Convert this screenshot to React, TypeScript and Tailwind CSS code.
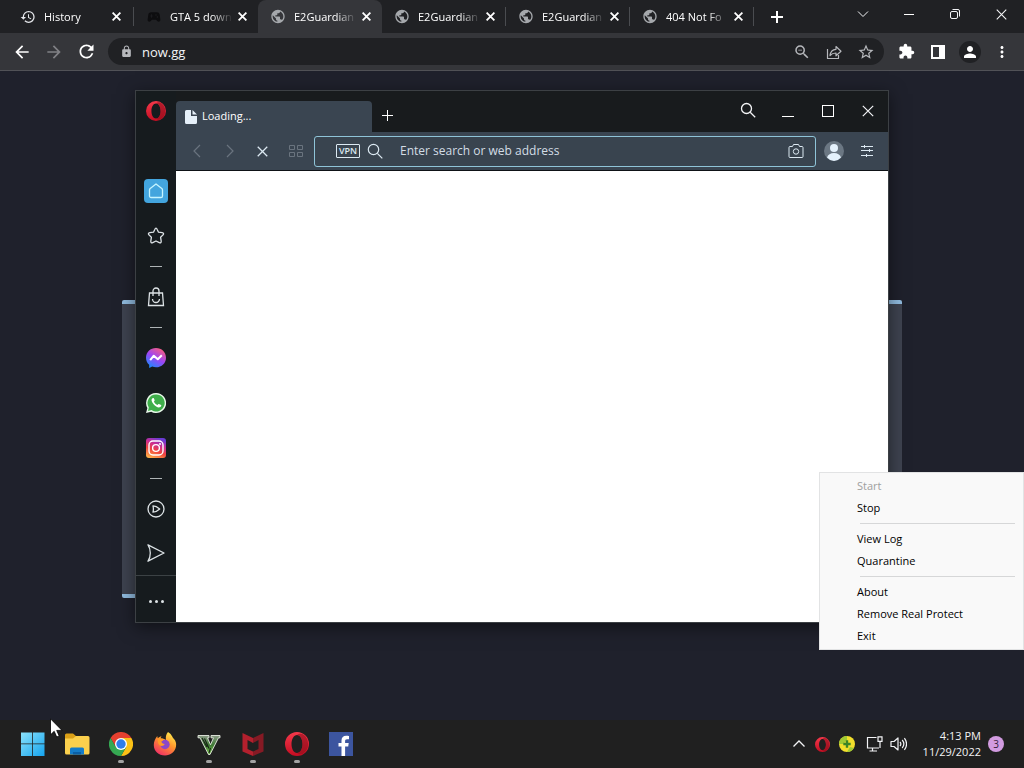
import type { ReactNode } from 'react';
import clsx from 'clsx';
import {
  MdArrowBack,
  MdArrowForward,
  MdExtension,
  MdHistory,
  MdLock,
  MdMoreVert,
  MdPerson,
  MdPublic,
  MdRefresh,
  MdSportsEsports,
  MdStarBorder,
  MdZoomOut,
} from 'react-icons/md';

const globe = <MdPublic className="text-[#a5a8ac]" size={17} />;

const tabs = [
  { title: 'History', icon: <MdHistory className="text-gray-200" size={16} /> },
  { title: 'GTA 5 down', icon: <MdSportsEsports className="text-[#0d0d0f]" size={18} /> },
  { title: 'E2Guardian', icon: globe, active: true },
  { title: 'E2Guardian', icon: globe },
  { title: 'E2Guardian', icon: globe },
  { title: '404 Not Fo', icon: globe },
];

function IconButton({
  label,
  className,
  children,
}: {
  label: string;
  className?: string;
  children: ReactNode;
}) {
  return (
    <button aria-label={label} className={clsx('flex shrink-0 items-center justify-center', className)}>
      {children}
    </button>
  );
}

function CrossIcon({ size = 12, stroke = 1.2 }: { size?: number; stroke?: number }) {
  return (
    <svg width={size} height={size} viewBox="0 0 12 12" fill="none" stroke="currentColor" strokeWidth={stroke}>
      <path d="M.8.8l10.400 10.400M11.200.8L.8 11.200" />
    </svg>
  );
}

function OperaLogo({ size, id }: { size: number; id: string }) {
  return (
    <svg width={size} height={size} viewBox="0 0 24 24">
      <defs>
        <linearGradient id={id} x1="0" y1="0" x2="0" y2="1">
          <stop offset="0" stopColor="#f5394b" />
          <stop offset="1" stopColor="#c40d22" />
        </linearGradient>
      </defs>
      <path
        fillRule="evenodd"
        fill={`url(#${id})`}
        d="M12 0a12 12 0 1 0 0 24 12 12 0 0 0 0-24zm0 3c3.200 0 5.500 4 5.500 9s-2.300 9-5.500 9-5.500-4-5.500-9S8.800 3 12 3z"
      />
      <path
        fill="#8d0d1b"
        opacity=".6"
        d="M12 3c2-1.800 5-1.800 7-.1A12 12 0 0 1 19 21c-2 1.800-5 1.800-7 0 3.200 0 5.500-4 5.500-9S15.200 3 12 3z"
      />
    </svg>
  );
}

function TabStrip() {
  return (
    <div className="flex h-[33px] bg-[#202124] pl-[9px]">
      {tabs.map((tab, i) => (
        <div
          key={i}
          className={clsx(
            'flex shrink-0 items-center',
            i === 0 ? 'w-[125px] pl-[11px]' : 'w-[124px] pl-3',
            tab.active && 'rounded-t-lg bg-[#35363a]',
          )}
        >
          <span className="flex w-4 shrink-0 justify-center">{tab.icon}</span>
          <span className="ml-2 w-[64px] shrink-0 whitespace-nowrap text-[11px] leading-4 text-white [mask-image:linear-gradient(to_right,black_65%,transparent_98%)]">
            {tab.title}
          </span>
          <IconButton label={`Close ${tab.title}`} className="h-4 w-4 text-white">
            <CrossIcon size={9} stroke={2.4} />
          </IconButton>
          <span
            className={clsx('ml-auto h-[19px] w-px', i === 1 || i === 2 ? 'bg-transparent' : 'bg-[#4a4c50]')}
          />
        </div>
      ))}
      <IconButton label="New tab" className="ml-[13px] w-5 text-white">
        <svg width="12" height="12" viewBox="0 0 12 12" stroke="currentColor" strokeWidth="2">
          <path d="M6 0v12M0 6h12" />
        </svg>
      </IconButton>
      <div className="ml-auto flex h-7 text-gray-100">
        <IconButton label="Search tabs" className="w-[46px]">
          <svg width="12" height="8" viewBox="0 0 12 8" fill="none" stroke="currentColor">
            <path d="M1 1.500l5 5 5-5" />
          </svg>
        </IconButton>
        <IconButton label="Minimize" className="w-[46px]">
          <span className="h-px w-[10px] bg-white" />
        </IconButton>
        <IconButton label="Restore" className="w-[46px]">
          <svg width="12" height="12" viewBox="0 0 12 12" fill="none" stroke="currentColor">
            <rect x="1.500" y="3.500" width="7" height="7" rx="1.500" />
            <path d="M3.500 1.500H9A1.500 1.500 0 0 1 10.500 3V8.500" />
          </svg>
        </IconButton>
        <IconButton label="Close" className="w-[46px]">
          <CrossIcon size={11} />
        </IconButton>
      </div>
    </div>
  );
}

function Toolbar() {
  return (
    <div className="flex h-[38px] items-center gap-[6px] border-b border-[#515257] bg-[#35363a] px-[6px]">
      <div className="flex text-white">
        <IconButton label="Back" className="w-8">
          <MdArrowBack size={20} />
        </IconButton>
        <IconButton label="Forward" className="w-8 text-[#808185]">
          <MdArrowForward size={20} />
        </IconButton>
        <IconButton label="Reload" className="w-8">
          <MdRefresh size={21} />
        </IconButton>
      </div>
      <div className="flex h-[27px] flex-1 items-center rounded-full bg-[#202124] pl-3 pr-[2px] text-[#b6b8bc]">
        <MdLock size={13} className="shrink-0" />
        <input
          aria-label="Address"
          defaultValue="now.gg"
          className="ml-[9px] min-w-0 flex-1 bg-transparent text-[13px] leading-5 text-gray-100 outline-none"
        />
        <IconButton label="Zoom" className="w-8">
          <MdZoomOut size={18} />
        </IconButton>
        <IconButton label="Share" className="w-8">
          <svg width="16" height="16" viewBox="0 0 16 16" fill="none" stroke="currentColor" strokeWidth="1.200">
            <path d="M1.500 5v9.500h11V11M4 11.500c.5-4 2.500-6 6-6.200V2.500l5 4.700-5 4.600V9c-2.500 0-4.300.6-6 2.500z" strokeLinejoin="round" />
          </svg>
        </IconButton>
        <IconButton label="Bookmark" className="w-8">
          <MdStarBorder size={18} />
        </IconButton>
      </div>
      <div className="flex text-white">
        <IconButton label="Extensions" className="w-8">
          <MdExtension size={17} />
        </IconButton>
        <IconButton label="Side panel" className="w-8">
          <svg width="14" height="14" viewBox="0 0 14 14">
            <path fill="currentColor" fillRule="evenodd" d="M0 0h14v14H0zM2 2v10h6V2z" />
          </svg>
        </IconButton>
        <IconButton label="Profile" className="w-8">
          <span className="flex h-[22px] w-[22px] items-center justify-center rounded-full bg-[#202124]">
            <MdPerson size={18} />
          </span>
        </IconButton>
        <IconButton label="Menu" className="w-8">
          <MdMoreVert size={18} />
        </IconButton>
      </div>
    </div>
  );
}

function SidebarItem({ label, children, short }: { label: string; children: ReactNode; short?: boolean }) {
  return (
    <IconButton label={label} className={clsx('w-full', short ? 'h-11' : 'h-[45px]')}>
      {children}
    </IconButton>
  );
}

function SidebarRule() {
  return <div className="mx-auto mb-[7px] mt-2 h-px w-3 bg-[#aeb4b6]" />;
}

function OperaSidebar() {
  return (
    <nav aria-label="Sidebar" className="flex w-10 shrink-0 flex-col bg-[#161b1e] text-[#dde3e6]">
      <div className="flex h-[77px] justify-center pt-[10px]">
        <OperaLogo size={20} id="operaSide" />
      </div>
      <SidebarItem label="Home">
        <span className="flex h-6 w-6 items-center justify-center rounded-sm bg-[#43a5de]">
          <svg width="16" height="16" viewBox="0 0 16 16" fill="none" stroke="#c5f4ff" strokeWidth="1.300">
            <path d="M8 1l5.800 4.500c.5.400.7.800.7 1.400v6a1.600 1.600 0 0 1-1.600 1.600H3.100a1.600 1.600 0 0 1-1.600-1.600v-6c0-.6.2-1 .7-1.400z" strokeLinejoin="round" />
          </svg>
        </span>
      </SidebarItem>
      <SidebarItem label="Speed dials">
        <svg width="18" height="18" viewBox="0 0 18 18" fill="none" stroke="currentColor" strokeWidth="1.300" strokeLinejoin="round">
          <path d="M9 1.200c.6 0 .9.500 1.200 1.200l1.300 2.800 3.700.5c1.500.2 1.800 1.300.8 2.200l-2.400 2.400.6 3.900c.2 1.400-.7 2-1.900 1.400L9 14l-3.300 1.600c-1.200.6-2.100 0-1.900-1.400l.6-3.900L2 7.900C1 7 1.300 5.900 2.800 5.700l3.700-.5 1.300-2.800C8.100 1.700 8.400 1.200 9 1.200z" />
        </svg>
      </SidebarItem>
      <SidebarRule />
      <SidebarItem label="Shopping">
        <svg width="18" height="20" viewBox="0 0 18 20" fill="none" stroke="currentColor" strokeWidth="1.300">
          <path d="M2.500 6h13l1 12.500h-15zM6 9V4a3 3 0 0 1 6 0v5M5.500 12a3.500 3.500 0 0 0 7 0" />
        </svg>
      </SidebarItem>
      <SidebarRule />
      <SidebarItem label="Messenger">
        <svg width="20" height="20" viewBox="0 0 20 20">
          <defs>
            <linearGradient id="messenger" x1=".2" y1="1" x2=".8" y2="0">
              <stop offset="0" stopColor="#168dff" />
              <stop offset=".5" stopColor="#9c45f5" />
              <stop offset="1" stopColor="#ff5f78" />
            </linearGradient>
          </defs>
          <path fill="url(#messenger)" d="M10 0C4.300 0 0 4.100 0 9.700c0 2.900 1.200 5.400 3.200 7.100V20l3-1.400c1.200.5 2.500.7 3.800.7 5.700 0 10-4.100 10-9.600S15.700 0 10 0z" />
          <path fill="none" stroke="#fff" strokeWidth="2" strokeLinejoin="round" d="M4.200 12.200l3.600-4.500 4 3.600 4-4" />
        </svg>
      </SidebarItem>
      <SidebarItem label="WhatsApp">
        <svg width="20" height="20" viewBox="0 0 20 20">
          <path fill="#e9f9ea" d="M10 0a10 10 0 0 0-8.600 15L0 20l5.200-1.300A10 10 0 1 0 10 0z" />
          <path fill="#3fae4b" d="M10 1.500a8.500 8.500 0 0 0-7.200 13L2 18l3.500-.9A8.500 8.500 0 1 0 10 1.500z" />
          <path fill="#fff" d="M6.800 5c-1.900 1-1.700 3.300.6 6 2.500 2.900 5 4.300 6.900 3.100 1.200-.8 1.100-1.700.8-2l-2.200-1.100c-.4-.1-.6.1-1.300 1.100-1.500-.5-3-1.900-3.700-3.500.8-.9.900-1 .7-1.500L7.800 5.200C7.600 4.900 7.200 4.800 6.800 5z" />
        </svg>
      </SidebarItem>
      <SidebarItem label="Instagram">
        <svg width="20" height="20" viewBox="0 0 20 20">
          <defs>
            <linearGradient id="instagram" x1=".2" y1="1" x2=".6" y2="0">
              <stop offset="0" stopColor="#ffb34a" />
              <stop offset=".4" stopColor="#f0443e" />
              <stop offset=".7" stopColor="#cc2d93" />
              <stop offset="1" stopColor="#6a3bd5" />
            </linearGradient>
          </defs>
          <rect width="20" height="20" rx="3" fill="url(#instagram)" />
          <g fill="none" stroke="#fff" strokeWidth="1.400">
            <rect x="3" y="3" width="14" height="14" rx="4" />
            <circle cx="10" cy="10" r="3.400" />
          </g>
          <circle cx="14" cy="6" r="1" fill="#fff" />
        </svg>
      </SidebarItem>
      <SidebarRule />
      <SidebarItem label="Player">
        <svg width="18" height="18" viewBox="0 0 18 18" fill="none" stroke="currentColor" strokeWidth="1.300" strokeLinejoin="round">
          <circle cx="9" cy="9" r="8" />
          <path d="M6 5.800c1.800 0 4.500 1.200 6.700 3.200C10.500 11 7.800 12.200 6 12.200c.5-2 .5-4.400 0-6.400z" />
        </svg>
      </SidebarItem>
      <SidebarItem label="My Flow" short>
        <svg width="18" height="18" viewBox="0 0 18 18" fill="none" stroke="currentColor" strokeWidth="1.300" strokeLinejoin="round">
          <path d="M1 .8L17 9 1 17.200C2.500 15 3.300 12 3.300 9S2.500 3 1 .8z" />
        </svg>
      </SidebarItem>
      <div className="flex flex-1 border-t border-[#3c4245]">
        <IconButton label="Sidebar setup" className="w-full gap-[3px] pt-1">
          <span className="h-[3px] w-[3px] rounded-full bg-current" />
          <span className="h-[3px] w-[3px] rounded-full bg-current" />
          <span className="h-[3px] w-[3px] rounded-full bg-current" />
        </IconButton>
      </div>
    </nav>
  );
}

function OperaWindow() {
  return (
    <section
      aria-label="Opera"
      className="absolute left-[135px] top-[90px] flex h-[533px] w-[754px] border border-[#3c4044] bg-[#161b1e] shadow-[0_4px_16px_rgba(0,0,0,0.5)]"
    >
      <OperaSidebar />
      <div className="flex min-w-0 flex-1 flex-col">
        <div className="flex h-[41px] items-end bg-[#181b1d]">
          <div className="flex h-[31px] w-[196px] items-center gap-[5px] rounded-t-sm bg-[#3a4551] pl-[9px] text-[11px] text-white">
            <svg width="12" height="14" viewBox="0 0 12 14" fill="#e6f0f9">
              <path d="M1.500 0H6v6h6v6.500a1.500 1.500 0 0 1-1.500 1.500h-9A1.500 1.500 0 0 1 0 12.500v-11A1.500 1.500 0 0 1 1.500 0zM7.500 0L12 4.500H7.500z" />
            </svg>
            <span>Loading...</span>
          </div>
          <IconButton label="New tab" className="h-[34px] w-[30px] text-white">
            <svg width="12" height="12" viewBox="0 0 12 12" stroke="currentColor">
              <path d="M6.500 1v11M1 6.500h11" />
            </svg>
          </IconButton>
          <div className="ml-auto flex h-full items-start text-gray-100">
            <IconButton label="Search tabs" className="h-[38px] w-10">
              <svg width="16" height="16" viewBox="0 0 16 16" fill="none" stroke="currentColor" strokeWidth="1.300">
                <circle cx="6.500" cy="6.500" r="5" />
                <path d="M10.200 10.200l5 5" />
              </svg>
            </IconButton>
            <IconButton label="Minimize" className="h-10 w-10 pt-[11px]">
              <span className="h-px w-3 bg-white" />
            </IconButton>
            <IconButton label="Maximize" className="h-10 w-10">
              <span className="h-3 w-3 border border-white" />
            </IconButton>
            <IconButton label="Close" className="h-10 w-10">
              <CrossIcon />
            </IconButton>
          </div>
        </div>
        <div className="flex h-[39px] items-center border-b border-[#0e1216] bg-[#3a4551] pl-1 pr-[6px] text-[#dce9f2]">
          <IconButton label="Back" className="w-[33px] text-[#6a747f]">
            <svg width="8" height="14" viewBox="0 0 8 14" fill="none" stroke="currentColor" strokeWidth="1.200">
              <path d="M7 1L1 7l6 6" />
            </svg>
          </IconButton>
          <IconButton label="Forward" className="w-[33px] text-[#6a747f]">
            <svg width="8" height="14" viewBox="0 0 8 14" fill="none" stroke="currentColor" strokeWidth="1.200">
              <path d="M1 1l6 6-6 6" />
            </svg>
          </IconButton>
          <IconButton label="Stop" className="w-[33px]">
            <CrossIcon size={11} stroke={1.4} />
          </IconButton>
          <IconButton label="Speed dial" className="w-[33px] text-[#6a747f]">
            <svg width="14" height="12" viewBox="0 0 14 12" fill="none" stroke="currentColor">
              <path d="M.5.5h5v4h-5zM8.500.5h5v4h-5zM.5 7.500h5v4h-5zM8.500 7.500h5v4h-5z" />
            </svg>
          </IconButton>
          <div className="ml-[2px] flex h-[31px] flex-1 items-center rounded-[3px] border border-[#8fc4d8] bg-[#39444f] pl-[21px]">
            <button className="h-[14px] w-6 shrink-0 rounded-[1px] border border-[#dce9f2] text-center text-[9px] font-semibold leading-3">
              VPN
            </button>
            <svg width="16" height="16" viewBox="0 0 16 16" fill="none" stroke="currentColor" strokeWidth="1.200" className="ml-[7px] shrink-0">
              <circle cx="6.500" cy="6.500" r="5.200" />
              <path d="M10.300 10.300l5 5" />
            </svg>
            <input
              aria-label="Search or address"
              placeholder="Enter search or web address"
              className="ml-[17px] min-w-0 flex-1 bg-transparent text-[12px] leading-5 outline-none placeholder:text-[#d3dde5]"
            />
            <IconButton label="Snapshot" className="w-[38px]">
              <svg width="16" height="14" viewBox="0 0 16 14" fill="none" stroke="currentColor">
                <path d="M2 2.500h2.500l1-2h5l1 2H14a1 1 0 0 1 1 1v9a1 1 0 0 1-1 1H2a1 1 0 0 1-1-1v-9a1 1 0 0 1 1-1z" />
                <circle cx="8" cy="7.500" r="2.700" />
              </svg>
            </IconButton>
          </div>
          <IconButton label="Account" className="w-9">
            <svg width="20" height="20" viewBox="0 0 20 20">
              <circle cx="10" cy="10" r="10" fill="#6b7783" />
              <circle cx="10" cy="7" r="4" fill="#e4f1fc" />
              <path d="M3 16.500C4 13.500 6.500 12 10 12s6 1.500 7 4.500A10 10 0 0 1 10 20a10 10 0 0 1-7-3.500z" fill="#e4f1fc" />
            </svg>
          </IconButton>
          <IconButton label="Easy setup" className="w-[30px]">
            <svg width="12" height="12" viewBox="0 0 12 12" stroke="currentColor">
              <path d="M0 1.500h12M0 5.500h12M0 10.500h12M3.500 0v3M8.500 4v3M5.500 9v3" />
            </svg>
          </IconButton>
        </div>
        <main className="flex-1 bg-white" />
      </div>
    </section>
  );
}

const menuGroups = [['Start', 'Stop'], ['View Log', 'Quarantine'], ['About', 'Remove Real Protect', 'Exit']];

function TrayMenu() {
  return (
    <div
      role="menu"
      className="absolute right-0 top-[472px] w-[205px] border border-[#e2e3e4] bg-[#f9f9f9] py-[2px] text-[11px] text-black"
    >
      {menuGroups.map((group, i) => (
        <div key={group[0]} role="group">
          {i > 0 && <div className="my-1 ml-10 mr-2 h-px bg-[#d6d7d8]" />}
          {group.map((item) => (
            <button
              key={item}
              role="menuitem"
              disabled={item === 'Start'}
              className="block h-[22px] w-full pl-[37px] text-left leading-[22px] disabled:text-[#a0a0a0]"
            >
              {item}
            </button>
          ))}
        </div>
      ))}
    </div>
  );
}

const apps = [
  {
    name: 'Start',
    icon: (
      <svg width="24" height="24" viewBox="0 0 24 24">
        <defs>
          <linearGradient id="win" x1="0" y1="0" x2="1" y2="1">
            <stop offset="0" stopColor="#8be2fb" />
            <stop offset="1" stopColor="#14a3ee" />
          </linearGradient>
        </defs>
        <path fill="url(#win)" d="M0 .5h11.200V11.500H0zM12 .5h11.500v11H12zM0 12.300h11.200V24H0zM12 12.300h11.500V24H12z" />
      </svg>
    ),
  },
  {
    name: 'File Explorer',
    icon: (
      <svg width="26" height="24" viewBox="0 0 26 24">
        <path fill="#dba017" d="M1 3a1.500 1.500 0 0 1 1.500-1.500H9L12 4v5H1z" />
        <path fill="#fbd04d" d="M1 6.500h8L12 4h12a1.500 1.500 0 0 1 1.500 1.500V21a1.500 1.500 0 0 1-1.500 1.500H2.500A1.500 1.500 0 0 1 1 21z" />
        <path fill="#147cc9" d="M6 22.500V17a1.500 1.500 0 0 1 1.500-1.500h11A1.500 1.500 0 0 1 20 17v5.500z" />
        <path fill="#0b5fa5" d="M9 20h8v2.500H9z" />
      </svg>
    ),
  },
  {
    name: 'Chrome',
    running: true,
    icon: (
      <svg width="24" height="24" viewBox="0 0 24 24">
        <path fill="#e6402f" d="M1.600 6A12 12 0 0 1 22.400 6H12L6.800 15z" />
        <path fill="#fbc116" d="M22.400 6A12 12 0 0 1 12 24l5.200-9L12 6z" />
        <path fill="#35a852" d="M1.600 6l5.200 9H17.200L12 24A12 12 0 0 1 1.600 6z" />
        <circle cx="12" cy="12" r="6" fill="#fff" />
        <circle cx="12" cy="12" r="4.700" fill="#2f7de9" />
      </svg>
    ),
  },
  {
    name: 'Firefox',
    icon: (
      <svg width="24" height="24" viewBox="0 0 24 24">
        <defs>
          <linearGradient id="fox" x1=".8" y1="0" x2=".2" y2="1">
            <stop offset="0" stopColor="#fff04f" />
            <stop offset=".45" stopColor="#ff942c" />
            <stop offset="1" stopColor="#f0286a" />
          </linearGradient>
        </defs>
        <path fill="url(#fox)" d="M15 0c4 2.500 4 5 6 7 1.800 2 2.500 4.500 2 7.500-1 5.500-5.500 9-11 9C5.500 23.500.8 19 .8 13c0-3.500 1.400-6.500 3.500-9 0 1 .2 1.700.6 2.300C6 5 7 4.500 8.500 4.200c-.6.8-.9 1.600-.8 2.300 2 .1 3.500.4 5.300 1.500C12.500 5 13 2 15 0z" />
        <circle cx="12" cy="12.500" r="4.700" fill="#8b48c7" />
        <path fill="#ff9b28" d="M5 7c2.500-1 5-.5 6.500.8-1.500.4-2 1.200-3.200 1.500.2 1.500 1 2.500 3.500 2.700-1 2-3 2.500-5 1.500C5 12 4.500 9.500 5 7z" />
      </svg>
    ),
  },
  {
    name: 'Grand Theft Auto V',
    running: true,
    icon: (
      <svg width="24" height="24" viewBox="0 0 24 24" strokeLinejoin="round">
        <defs>
          <linearGradient id="five" x1="0" y1="0" x2="0" y2="1">
            <stop offset="0" stopColor="#8b9a86" />
            <stop offset=".5" stopColor="#3f7a35" />
            <stop offset="1" stopColor="#7cc050" />
          </linearGradient>
        </defs>
        <path fill="url(#five)" stroke="#e6ece2" strokeWidth=".9" d="M1 3.500h11v2.300h-1.500l3 7 3-7H14V3.500h9v2.300h-1.500L13 22.500h-1.500L3 5.800H1z" />
        <path fill="none" stroke="#152414" strokeWidth="1.100" d="M5 6l5 9M7.500 6.500l4.500 10M12 21l1.500-5" />
      </svg>
    ),
  },
  {
    name: 'McAfee',
    running: true,
    icon: (
      <svg width="24" height="24" viewBox="0 0 24 24">
        <path fill="#b3202d" d="M1.500 1L12 6v5L6.500 8v9l5.500 2.500V24L1.500 19.500z" />
        <path fill="#861a24" d="M22.500 1L12 6v5l5.500-3v9L12 19.500V24l10.500-4.500z" />
      </svg>
    ),
  },
  { name: 'Opera', running: true, icon: <OperaLogo size={24} id="operaTask" /> },
  {
    name: 'Facebook',
    icon: (
      <svg width="24" height="24" viewBox="0 0 24 24">
        <rect width="24" height="24" fill="#3c559f" />
        <path fill="#fff" d="M12.500 24v-9.500h-3V11h3V8.500c0-3.200 1.800-4.800 4.700-4.800 1.200 0 2.300.1 2.800.2v3.300h-2c-1.500 0-1.900.8-1.900 1.900V11h3.600l-.5 3.500h-3.100V24z" />
      </svg>
    ),
  },
];

function Taskbar() {
  return (
    <footer className="flex h-12 items-center bg-[#202020] pl-[11px] text-gray-100">
      {apps.map((app) => (
        <button key={app.name} aria-label={app.name} className="flex h-12 w-11 shrink-0 flex-col items-center justify-end pb-[5px]">
          {app.icon}
          <span className={clsx('mt-1 h-[3px] w-[6px] rounded-full', app.running ? 'bg-[#a3a3a3]' : 'bg-transparent')} />
        </button>
      ))}
      <div className="ml-auto flex items-center">
        <IconButton label="Hidden icons" className="w-6">
          <svg width="12" height="8" viewBox="0 0 12 8" fill="none" stroke="currentColor" strokeWidth="1.300">
            <path d="M.5 6.500L6 1l5.500 5.500" />
          </svg>
        </IconButton>
        <IconButton label="Opera" className="w-6">
          <OperaLogo size={15} id="operaTray" />
        </IconButton>
        <IconButton label="Real Protect" className="w-6">
          <svg width="16" height="16" viewBox="0 0 16 16">
            <circle cx="8" cy="8" r="8" fill="#f2df2c" />
            <path fill="#9fc934" d="M8 0a8 8 0 0 0-8 8h4l4-4zM8 16a8 8 0 0 0 7-4l-4-1z" />
            <path stroke="#3b8527" strokeWidth="2.400" d="M8 4.300v7.400M4.300 8h7.400" />
          </svg>
        </IconButton>
        <IconButton label="Network" className="w-7 pl-1">
          <svg width="17" height="16" viewBox="0 0 17 16" fill="none" stroke="currentColor" strokeWidth="1.200">
            <path d="M10.500 1.500h-9v10.500h11.500M6.500 12v3M3.500 15h7.500M12 .8h4v4.500h-4zM14 5.300V12" />
          </svg>
        </IconButton>
        <IconButton label="Volume" className="w-6">
          <svg width="17" height="14" viewBox="0 0 17 14" fill="none" stroke="currentColor" strokeWidth="1.200" strokeLinejoin="round">
            <path d="M1 4.500h3L8 1v12L4 9.500H1zM10 5c1 1.200 1 2.800 0 4M12.200 3c2 2.400 2 5.600 0 8M14.400 1.200c2.600 3.500 2.600 8.100 0 11.600" />
          </svg>
        </IconButton>
        <button className="ml-3 text-right text-[11px] leading-4">
          <span className="block">4:13 PM</span>
          <span className="block">11/29/2022</span>
        </button>
        <button
          aria-label="3 notifications"
          className="ml-[7px] mr-5 flex h-4 w-4 items-center justify-center rounded-full bg-[#d29be0] text-[10px] text-[#34203b]"
        >
          3
        </button>
      </div>
    </footer>
  );
}

export default function App() {
  return (
    <div className="relative flex min-h-screen flex-col overflow-hidden bg-[#202124] font-['Open_Sans','Noto_Sans',sans-serif]">
      <header>
        <TabStrip />
        <Toolbar />
      </header>
      <div className="flex-1 bg-[#1f212c] px-4 pt-[229px]">
        <div className="mx-auto h-[298px] max-w-[780px] rounded-xs border-y-4 border-[#91bce0] bg-[#3e4350]" />
      </div>
      <Taskbar />
      <OperaWindow />
      <TrayMenu />
      {/* Mouse pointer */}
      <svg className="absolute left-[50px] top-[718px]" width="13" height="20" viewBox="0 0 13 20">
        <path fill="#fff" stroke="#000" strokeWidth=".8" d="M.5.800v16l3.700-3.500 2.500 5.700 2.500-1.100-2.500-5.500H12z" />
      </svg>
    </div>
  );
}
